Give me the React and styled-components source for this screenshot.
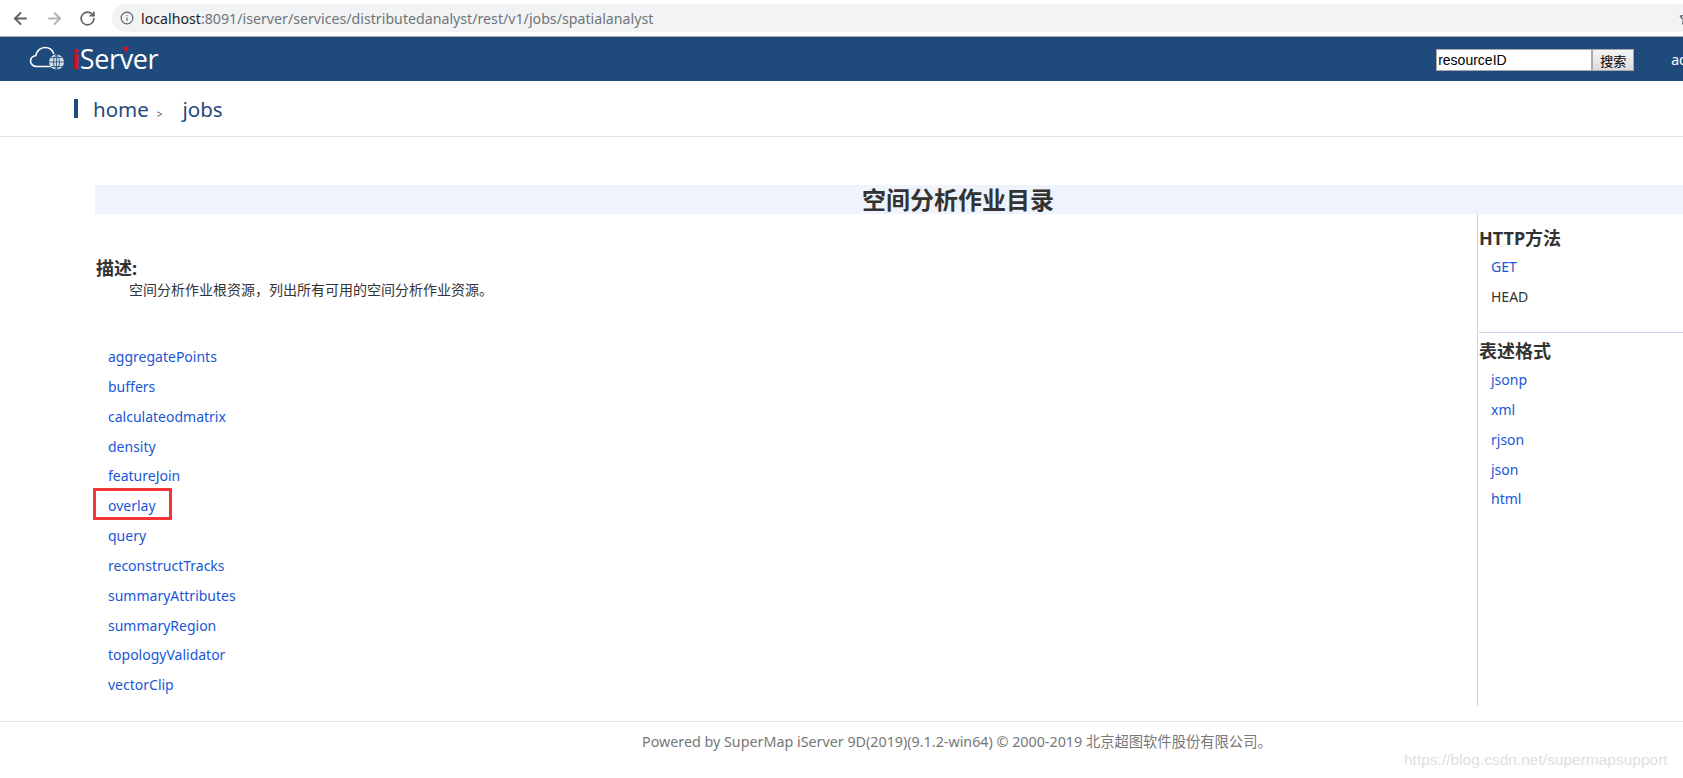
import styled, { createGlobalStyle } from "styled-components";
import { ArrowLeft, ArrowRight, RotateCw, Info, Star } from "lucide-react";

const cjk = `"Noto Sans", "Noto Sans CJK SC", sans-serif`;

const GlobalStyle = createGlobalStyle`
  html, body {
    margin: 0;
    padding: 0;
    background: #fff;
    overflow: hidden;
  }
  body {
    font-family: ${cjk};
    color: #333;
  }
`;

const Page = styled.div`
  position: relative;
  width: 1821px;
  height: 778px;
  overflow: hidden;
`;

const Toolbar = styled.div`
  width: 1683px;
  height: 37px;
  box-sizing: border-box;
  padding: 4px 0 4px 11px;
  display: flex;
  align-items: center;
  border-bottom: 1px solid #a9a9a9;
  overflow: hidden;
`;

const NavButton = styled.span`
  display: flex;
  width: 23px;
  margin-right: 11px;
  color: ${(p) => (p.$off ? "#b0b3b7" : "#5f6368")};
`;

const AddressBar = styled.div`
  flex: 1;
  height: 28px;
  margin-left: -1px;
  margin-right: -26px;
  padding: 0 14px 0 8px;
  display: flex;
  align-items: center;
  gap: 7px;
  background: #f1f3f4;
  border-radius: 14px;
  font-size: 14.2px;
  color: #70757a;
`;

const Host = styled.span`
  color: #202124;
`;

const Url = styled.span`
  flex: 1;
`;

const Header = styled.header`
  height: 44px;
  display: flex;
  align-items: center;
  background: #1f4b7c;
`;

const Logo = styled.div`
  display: flex;
  align-items: center;
  margin-left: 29px;
`;

const LogoText = styled.span`
  position: relative;
  margin-left: 6px;
  font-family: "Open Sans", sans-serif;
  font-size: 27px;
  line-height: 30px;
  letter-spacing: -0.4px;
  color: #fff;
`;

const RedI = styled.span`
  font-weight: 700;
  color: #d8121e;
`;

const VMark = styled.i`
  position: absolute;
  left: 51px;
  top: 3px;
  border-left: 3px solid transparent;
  border-right: 3px solid transparent;
  border-top: 6px solid #d8121e;
`;

const Search = styled.form`
  display: flex;
  margin: 2px 37px 0 auto;
`;

const SearchInput = styled.input`
  width: 156px;
  height: 22px;
  box-sizing: border-box;
  padding: 1px;
  border: 1px solid #a9a9a9;
  background: #fff;
  font-family: "Liberation Sans", sans-serif;
  font-size: 14px;
  color: #000;
  outline: none;
`;

const SearchButton = styled.button`
  width: 42px;
  height: 22px;
  padding: 0;
  border: 1px solid #a9a9a9;
  background: linear-gradient(#f4f4f4, #dcdcdc);
  font-family: ${cjk};
  font-size: 13px;
  color: #000;
`;

const User = styled.span`
  margin-right: 108px;
  font-size: 14px;
  color: #fff;
`;

const Breadcrumb = styled.nav`
  height: 56px;
  box-sizing: border-box;
  padding: 18px 0 0 74px;
  display: flex;
  align-items: flex-start;
  border-bottom: 1px solid #e2e2e2;
`;

const CrumbMark = styled.span`
  width: 4px;
  height: 19px;
  margin-right: 15px;
  background: #1f4b7c;
`;

const Crumb = styled.a`
  font-size: 20.5px;
  line-height: 21px;
  color: #1f4b7c;
`;

const CrumbArrow = styled.span`
  margin: 6px 20px 0 8px;
  font-size: 10px;
  line-height: 18px;
  color: #555;
`;

const Content = styled.main`
  margin: 48px 0 0 95px;
`;

const Title = styled.h1`
  height: 29px;
  margin: 0;
  background: #eff3fb;
  text-align: center;
  font-size: 24px;
  line-height: 30px;
  font-weight: 700;
  color: #333;
`;

const Columns = styled.div`
  display: flex;
  height: 492px;
`;

const MainColumn = styled.section`
  width: 1382px;
`;

const Heading = styled.h3`
  margin: 44px 0 0 1px;
  font-size: 18px;
  line-height: 20px;
  font-weight: 700;
  color: #333;
`;

const Description = styled.p`
  margin: 3px 0 0 34px;
  font-size: 14px;
  line-height: 18px;
  color: #333;
`;

const LinkList = styled.ul`
  margin: 43px 0 0 13px;
  padding: 0;
  list-style: none;
`;

const LinkItem = styled.li`
  position: relative;
  height: 29.85px;
  font-size: 14px;
  line-height: 29.85px;
  color: #1a56d6;
`;

const Highlight = styled.span`
  position: absolute;
  left: -15px;
  top: -3px;
  width: 79px;
  height: 32px;
  box-sizing: border-box;
  border: 3px solid #f53438;
`;

const Sidebar = styled.aside`
  flex: 1;
  padding-left: 1px;
  border-left: 1px solid #c5d3ec;
`;

const SideBlock = styled.div`
  height: ${(p) => p.$h}px;
  border-bottom: ${(p) => (p.$line ? "1px solid #c5d3ec" : "none")};
`;

const SideHeading = styled.h3`
  margin: 0 0 ${(p) => p.$gap}px;
  padding-top: ${(p) => p.$top}px;
  font-size: 18px;
  line-height: 22px;
  font-weight: 700;
  color: #333;
`;

const SideItem = styled.div`
  margin-left: 12px;
  height: 29.85px;
  font-size: 14px;
  line-height: 29.85px;
  color: ${(p) => (p.$plain ? "#333" : "#1a56d6")};
`;

const Footer = styled.footer`
  margin-top: 15px;
  padding: 10px 0 0 642px;
  border-top: 1px solid #e2e2e2;
  font-size: 14.3px;
  line-height: 20px;
  color: #777;
`;

const Watermark = styled.span`
  position: absolute;
  left: 1404px;
  top: 750px;
  font-family: "Liberation Sans", sans-serif;
  font-size: 15.5px;
  line-height: 20px;
  color: #e0e0e0;
`;

const jobs = [
  "aggregatePoints",
  "buffers",
  "calculateodmatrix",
  "density",
  "featureJoin",
  "overlay",
  "query",
  "reconstructTracks",
  "summaryAttributes",
  "summaryRegion",
  "topologyValidator",
  "vectorClip",
];

const formats = ["jsonp", "xml", "rjson", "json", "html"];

function CloudGlobe() {
  return (
    <svg width="37" height="26" viewBox="0 0 37 26" fill="none">
      <path
        d="M22 20.5H7.5C4 20.5 1.5 18 1.5 15c0-3 2.4-5.2 5.2-5.2C7.4 5 11.5 1.5 16 1.5c4 0 7.3 2.4 8.6 5.8"
        stroke="#fff"
        strokeWidth="1.6"
        strokeLinecap="round"
      />
      <circle cx="27.5" cy="16" r="7.5" fill="#d5dde8" />
      <path
        d="M20 16h15M27.5 8.5v15M22 11.5h11M22 20.5h11M27.5 8.5c-4 4-4 11 0 15M27.5 8.5c4 4 4 11 0 15"
        stroke="#1f4b7c"
        strokeWidth="0.8"
      />
    </svg>
  );
}

export default function App() {
  return (
    <Page>
      <GlobalStyle />
      <Toolbar>
        <NavButton><ArrowLeft size={19} strokeWidth={2.4} /></NavButton>
        <NavButton $off><ArrowRight size={19} strokeWidth={2.4} /></NavButton>
        <NavButton><RotateCw size={17} strokeWidth={2.4} /></NavButton>
        <AddressBar>
          <Info size={14} color="#5f6368" />
          <Url><Host>localhost</Host>:8091/iserver/services/distributedanalyst/rest/v1/jobs/spatialanalyst</Url>
          <Star size={16} color="#5f6368" />
        </AddressBar>
      </Toolbar>
      <Header>
        <Logo>
          <CloudGlobe />
          <LogoText>
            <RedI>i</RedI>Server
            <VMark />
          </LogoText>
        </Logo>
        <Search onSubmit={(e) => e.preventDefault()}>
          <SearchInput defaultValue="resourceID" />
          <SearchButton type="button">搜索</SearchButton>
        </Search>
        <User>admin</User>
      </Header>
      <Breadcrumb>
        <CrumbMark />
        <Crumb>home</Crumb>
        <CrumbArrow>&gt;</CrumbArrow>
        <Crumb>jobs</Crumb>
      </Breadcrumb>
      <Content>
        <Title>空间分析作业目录</Title>
        <Columns>
          <MainColumn>
            <Heading>描述:</Heading>
            <Description>空间分析作业根资源，列出所有可用的空间分析作业资源。</Description>
            <LinkList>
              {jobs.map((job) => (
                <LinkItem key={job}>
                  {job}
                  {job === "overlay" && <Highlight />}
                </LinkItem>
              ))}
            </LinkList>
          </MainColumn>
          <Sidebar>
            <SideBlock $h={118} $line>
              <SideHeading $top={13} $gap={3}>HTTP方法</SideHeading>
              <SideItem>GET</SideItem>
              <SideItem $plain>HEAD</SideItem>
            </SideBlock>
            <SideBlock $h={300}>
              <SideHeading $top={7} $gap={3}>表述格式</SideHeading>
              {formats.map((f) => (
                <SideItem key={f}>{f}</SideItem>
              ))}
            </SideBlock>
          </Sidebar>
        </Columns>
      </Content>
      <Footer>Powered by SuperMap iServer 9D(2019)(9.1.2-win64) © 2000-2019 北京超图软件股份有限公司。</Footer>
      <Watermark>https://blog.csdn.net/supermapsupport</Watermark>
    </Page>
  );
}
